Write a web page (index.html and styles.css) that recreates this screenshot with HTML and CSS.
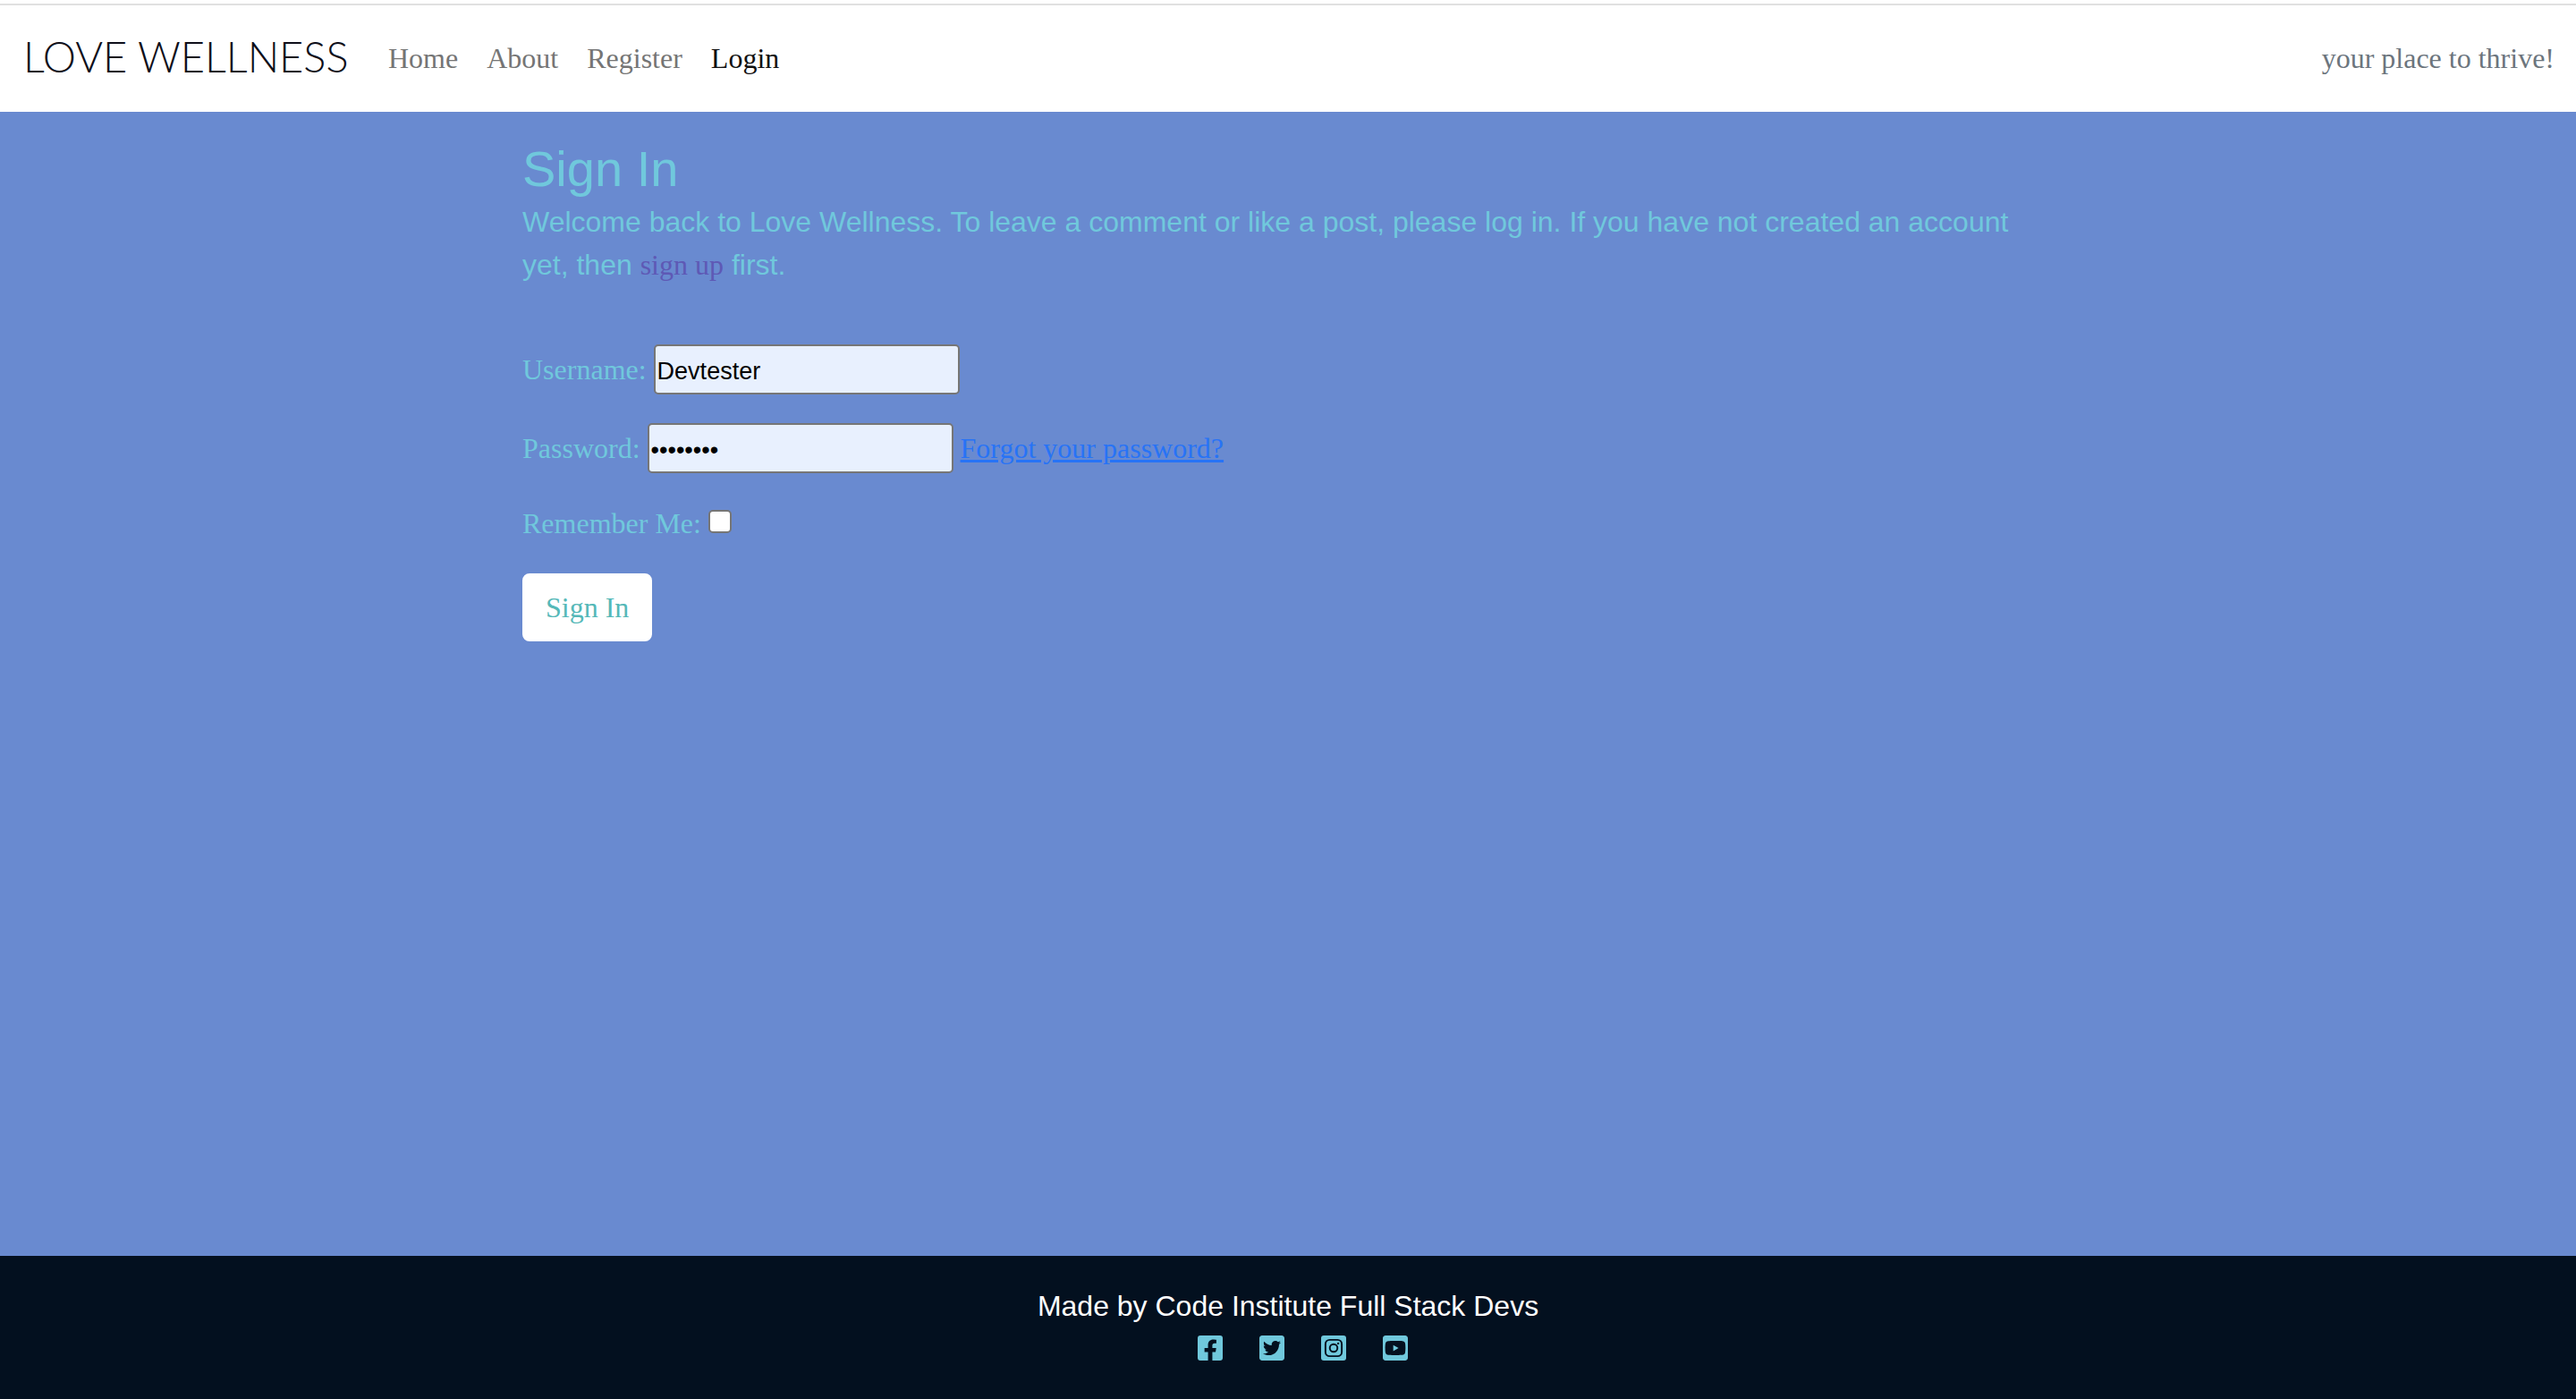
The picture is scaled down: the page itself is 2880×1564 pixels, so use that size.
FILE: index.html
```html
<!DOCTYPE html>
<html lang="en">
<head>
<meta charset="utf-8">
<meta name="viewport" content="width=device-width, initial-scale=1">
<title>Love Wellness</title>
<link rel="stylesheet" href="styles.css">
</head>
<body>
<header class="site-header">
  <nav class="navbar">
    <a class="brand" href="#">LOVE WELLNESS</a>
    <ul class="nav-list">
      <li><a class="nav-link" href="#">Home</a></li>
      <li><a class="nav-link" href="#">About</a></li>
      <li><a class="nav-link" href="#">Register</a></li>
      <li><a class="nav-link active" href="#" aria-current="page">Login</a></li>
    </ul>
    <span class="tagline">your place to thrive!</span>
  </nav>
</header>
<main class="main">
  <div class="column">
    <h1 class="title">Sign In</h1>
    <p class="intro">Welcome back to Love Wellness. To leave a comment or like a post, please log in. If you have not created an account yet, then <a class="signup" href="#">sign up</a> first.</p>
    <form class="login">
      <div class="field">
        <label for="username">Username:</label>
        <input class="text-input" type="text" id="username" name="login" value="Devtester">
      </div>
      <div class="field">
        <label for="password">Password:</label>
        <input class="text-input" type="password" id="password" name="password" value="password">
        <a class="forgot" href="#">Forgot your password?</a>
      </div>
      <div class="field">
        <label for="remember">Remember Me:</label>
        <input class="checkbox" type="checkbox" id="remember" name="remember">
      </div>
      <button class="btn" type="submit">Sign In</button>
    </form>
  </div>
</main>
<footer class="footer">
  <p class="credit">Made by Code Institute Full Stack Devs</p>
  <ul class="social">
    <li><a href="#" aria-label="Facebook"><svg class="icon" viewBox="0 32 448 448"><path d="M400 32H48A48 48 0 0 0 0 80v352a48 48 0 0 0 48 48h137.25V327.69h-63V256h63v-54.64c0-62.15 37-96.48 93.67-96.48 27.14 0 55.52 4.84 55.52 4.84v61h-31.27c-30.81 0-40.42 19.12-40.42 38.73V256h68.78l-11 71.69h-57.78V480H400a48 48 0 0 0 48-48V80a48 48 0 0 0-48-48z"/></svg></a></li>
    <li><a href="#" aria-label="Twitter"><svg class="icon" viewBox="0 32 448 448"><path d="M400 32H48C21.500 32 0 53.500 0 80v352c0 26.500 21.500 48 48 48h352c26.500 0 48-21.500 48-48V80c0-26.500-21.500-48-48-48zm-48.900 158.800c.2 2.800.2 5.700.2 8.500 0 86.700-66 186.600-186.600 186.600-37.200 0-71.700-10.800-100.700-29.400 5.300.6 10.400.8 15.800.8 30.700 0 58.900-10.400 81.400-28-28.800-.6-53-19.500-61.300-45.500 10.100 1.500 19.200 1.500 29.600-1.200-30-6.100-52.500-32.500-52.500-64.400v-.8c8.700 4.900 18.900 7.900 29.600 8.300a65.447 65.447 0 0 1-29.200-54.600c0-12.200 3.200-23.400 8.900-33.100 32.300 39.800 80.800 65.800 135.200 68.600-9.300-44.500 24-80.600 64-80.600 18.900 0 35.900 7.900 47.900 20.700 14.800-2.800 29-8.300 41.600-15.800-4.900 15.200-15.200 28-28.800 36.100 13.200-1.400 26-5.100 37.800-10.200-8.900 13.100-20.100 24.700-32.900 34z"/></svg></a></li>
    <li><a href="#" aria-label="Instagram"><svg class="icon" viewBox="0 32 448 448"><rect y="32" width="448" height="448" rx="48"/><rect class="cut-line" x="78" y="110" width="292" height="292" rx="76"/><circle class="cut-line" cx="224" cy="256" r="68"/><circle class="cut" cx="306" cy="174" r="19"/></svg></a></li>
    <li><a href="#" aria-label="YouTube"><svg class="icon" viewBox="0 32 448 448"><path d="M186.800 202.100l95.200 54.100-95.200 54.100V202.100zM448 80v352c0 26.500-21.500 48-48 48H48c-26.500 0-48-21.500-48-48V80c0-26.500 21.500-48 48-48h352c26.500 0 48 21.500 48 48zm-42 176.300s0-59.600-7.600-88.200c-4.200-15.800-16.500-28.200-32.200-32.400C337.900 128 224 128 224 128s-113.900 0-142.200 7.700c-15.700 4.200-28 16.600-32.200 32.400-7.600 28.500-7.600 88.200-7.600 88.200s0 59.600 7.600 88.200c4.200 15.800 16.500 27.700 32.200 31.900C110.100 384 224 384 224 384s113.900 0 142.200-7.700c15.700-4.200 28-16.100 32.200-31.900 7.600-28.500 7.600-88.100 7.600-88.100z"/></svg></a></li>
  </ul>
</footer>
</body>
</html>
```
FILE: styles.css
```css
* { box-sizing: border-box; }

body {
  margin: 0;
  min-height: 100vh;
  display: flex;
  flex-direction: column;
  background: #698ad0;
  color: #70c8dc;
  font: 32px/48px "Liberation Serif", serif;
}

ul { list-style: none; margin: 0; padding: 0; }

.site-header { background: #fff; padding-top: 4px; }

.navbar {
  display: flex;
  align-items: center;
  border-top: 2px solid #e0e0e0;
  padding: 27px 24px 28px;
}

.brand {
  width: 362px;
  margin-right: 32px;
  padding: 0 0 4px 2px;
  color: #0f0f1a;
  font: 300 47px/60px Lato, sans-serif;
  text-decoration: none;
  white-space: nowrap;
}

.nav-list { display: flex; }

.nav-link {
  display: block;
  padding: 8px 16px;
  color: #757575;
  text-decoration: none;
}

.nav-link.active { color: #111; }

.tagline { margin-left: auto; color: #6c757d; }

.main { flex: 1; padding: 30px 24px; }

.column { max-width: 1712px; margin: 0 auto; }

.title {
  margin: 0 0 2px;
  font: 400 56px/67px "Liberation Sans", sans-serif;
}

.intro {
  margin: 0 0 65px;
  font-family: "Liberation Sans", sans-serif;
}

.signup {
  color: #5e59b5;
  font-family: "Liberation Serif", serif;
  text-decoration: none;
}

.field { margin-bottom: 32px; }

.text-input {
  width: 342px;
  height: 56px;
  padding: 4px 2px 0;
  border: 2px solid #767676;
  border-radius: 5px;
  background: #e8f0fe;
  color: #000;
  font: 27px/48px "Liberation Sans", sans-serif;
}

.forgot { color: #2773f6; }

.checkbox {
  appearance: none;
  width: 26px;
  height: 26px;
  margin: 0;
  border: 2px solid #767676;
  border-radius: 5px;
  background: #fff;
}

.btn {
  display: block;
  padding: 12px 24px;
  border: 2px solid #fff;
  border-radius: 8px;
  background: #fff;
  color: #55b8b8;
  font: inherit;
}

.footer {
  padding: 32px 24px 28px;
  background: #03101f;
  text-align: center;
}

.credit {
  margin: 0;
  color: #fff;
  font-family: "Liberation Sans", sans-serif;
}

.social {
  display: flex;
  justify-content: center;
  gap: 41px;
  padding: 9px 0 15px 32px;
}

.social a { display: block; }

.icon { display: block; width: 28px; height: 28px; fill: #70c8dc; }

.icon .cut { fill: #03101f; }

.icon .cut-line { fill: none; stroke: #03101f; stroke-width: 31px; }
```
